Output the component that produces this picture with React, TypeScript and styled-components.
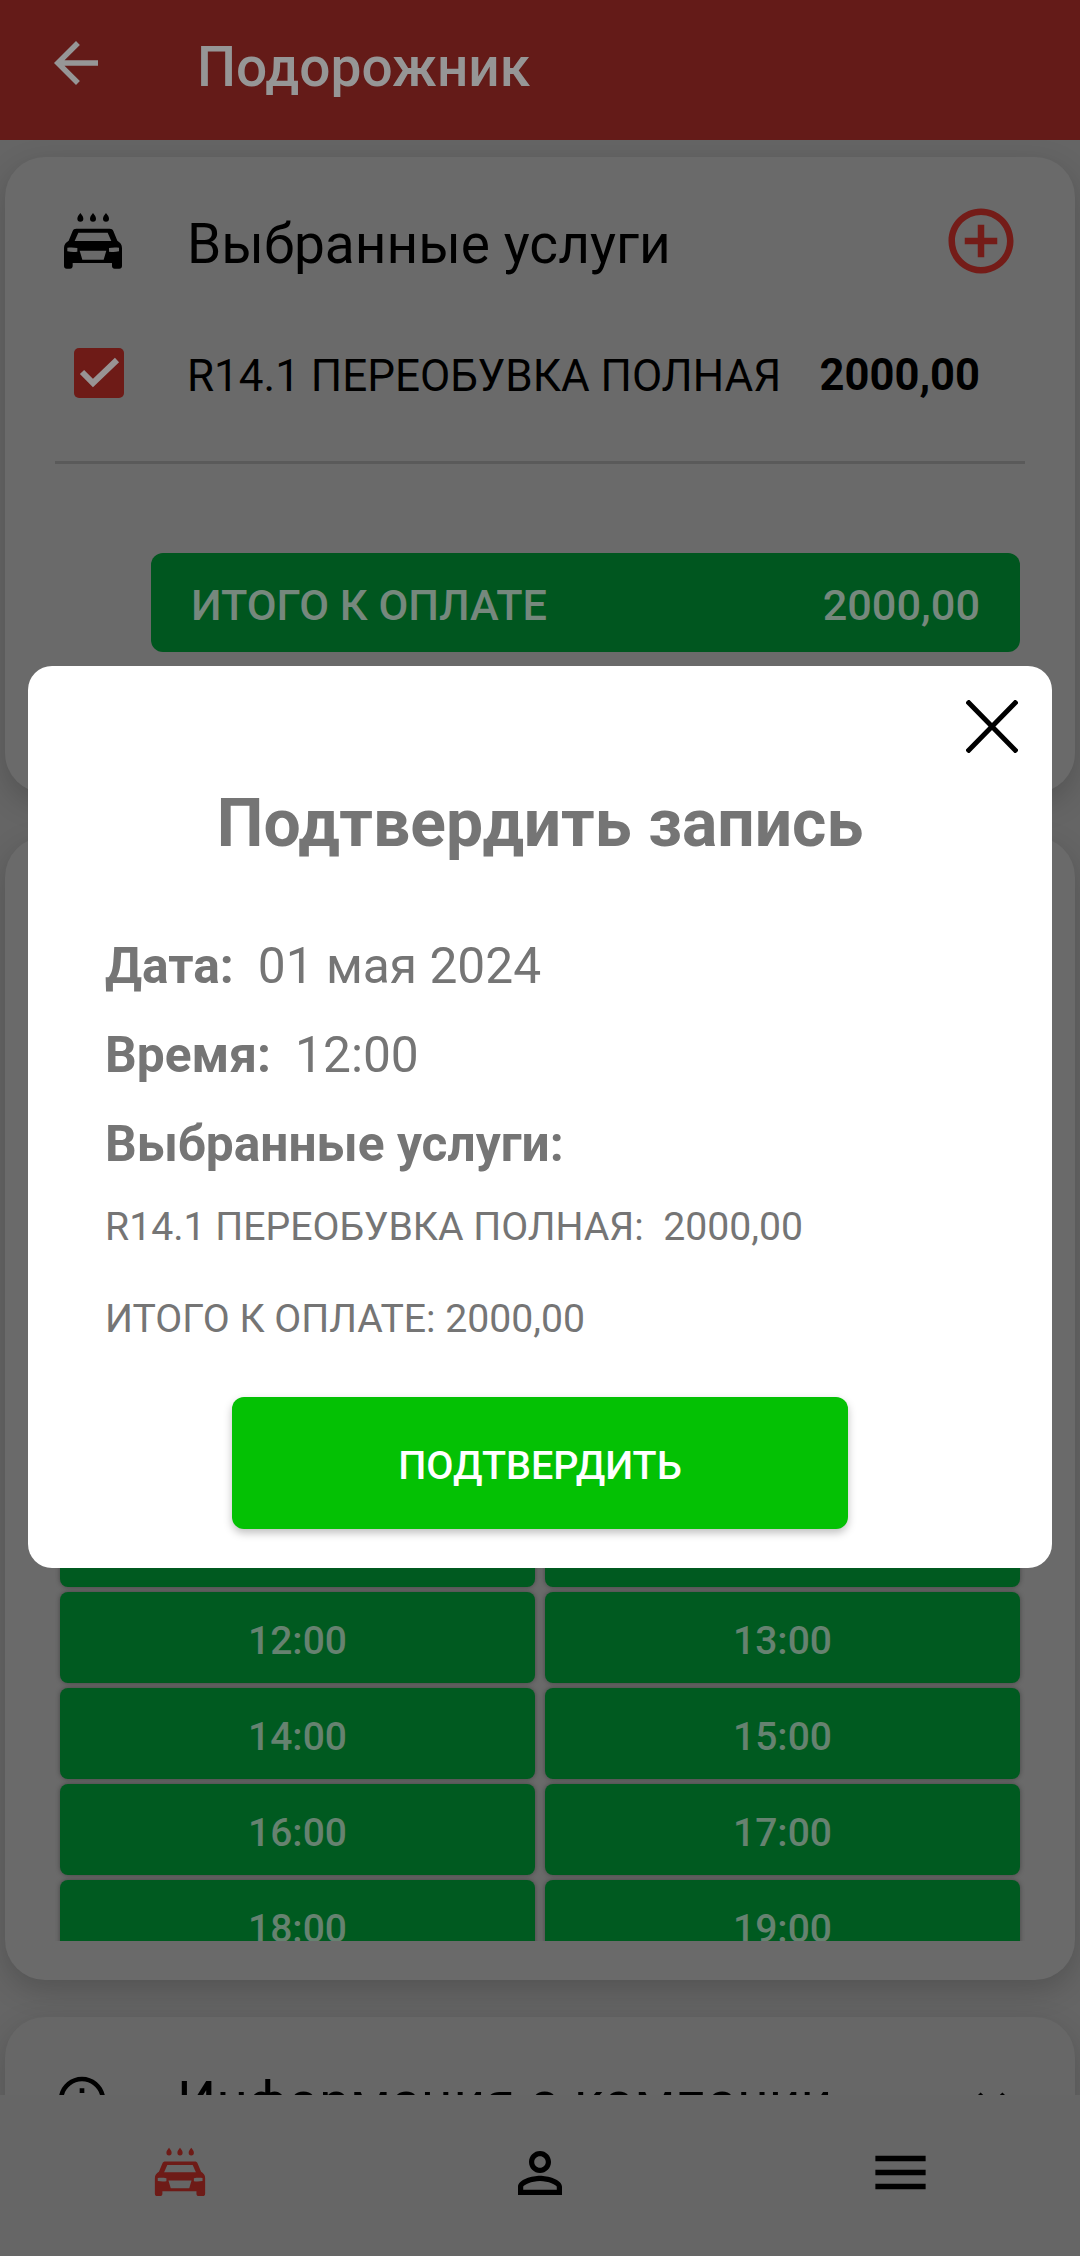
import { createGlobalStyle, styled } from "styled-components";

const GlobalStyle = createGlobalStyle`
  html, body {
    margin: 0;
    padding: 0;
    background: #656565;
  }
  * {
    box-sizing: border-box;
  }
`;

const Screen = styled.div`
  position: relative;
  display: flex;
  flex-direction: column;
  width: 1080px;
  height: 2256px;
  overflow: hidden;
  background: #656565;
  font-family: Roboto, "Noto Sans", sans-serif;
  color: #000;
`;

const Header = styled.header`
  display: flex;
  align-items: center;
  flex: 0 0 140px;
  padding: 0 0 14px 43px;
  background: #641b18;
  color: #969696;
  font-size: 55px;
  font-weight: 500;
`;
const HeaderTitle = styled.span`
  margin: 8px 0 0 88px;
`;

const Content = styled.main`
  display: flex;
  flex-direction: column;
  flex: 1;
  min-height: 0;
  overflow: hidden;
  padding: 17px 5px 0;
`;

const Card = styled.section<{ $height: number; $gap: number; $flat?: boolean }>`
  flex: 0 0 ${(p) => p.$height}px;
  display: flex;
  flex-direction: column;
  margin-bottom: ${(p) => p.$gap}px;
  padding: 0 50px;
  border-radius: 40px;
  background: ${(p) => (p.$flat ? "#676767" : "#6a6a6a")};
  box-shadow: 0 10px 30px rgba(0, 0, 0, 0.18);
`;

const TitleRow = styled.div`
  display: flex;
  align-items: center;
  height: 120px;
  margin: 24px 0 0 8px;
  font-size: 55px;
`;
const TitleText = styled.span`
  flex: 1;
  margin: 6px 0 0 64px;
`;
const PlusButton = styled.span`
  display: flex;
  margin-right: 5px;
  color: #741c18;
`;

const ServiceRow = styled.div`
  display: flex;
  align-items: center;
  height: 80px;
  margin: 33px 0 0 19px;
  font-size: 44px;
`;
const CheckBox = styled.span`
  display: flex;
  flex: 0 0 50px;
  height: 50px;
  margin-top: -3px;
  border-radius: 5px;
  background: #6e1b17;
  color: #989494;
`;
const ServiceName = styled.span`
  flex: 1;
  margin: 3px 0 0 63px;
`;
const Price = styled.span`
  margin: 3px 45px 0 0;
  font-size: 43.5px;
  font-weight: 700;
`;

const Divider = styled.hr`
  height: 3px;
  margin: 47px 0 0;
  border: 0;
  background: #5a5a5a;
`;

const TotalBar = styled.div`
  display: flex;
  align-items: center;
  justify-content: space-between;
  height: 99px;
  margin: 89px 5px 0 96px;
  padding: 5px 40px 0;
  border-radius: 12px;
  background: #00561f;
  color: #76887d;
  font-size: 43.3px;
  font-weight: 500;
`;

const TimeList = styled.div`
  display: grid;
  grid-template-columns: 1fr 1fr;
  grid-auto-rows: 91px;
  gap: 5px 10px;
  height: 445px;
  margin-top: 659px;
  padding: 0 5px;
  overflow: hidden;
`;
const TimeSlot = styled.div`
  display: flex;
  align-items: center;
  justify-content: center;
  padding-top: 6px;
  border-radius: 8px;
  background: #005a20;
  color: #668270;
  font-size: 39px;
  font-weight: 500;
  box-shadow: 0 0 5px rgba(0, 0, 0, 0.35);
`;

const InfoRow = styled.div`
  display: flex;
  align-items: center;
  height: 56px;
  margin: 55px 5px 0 -1px;
  font-size: 55px;
`;
const InfoText = styled.span`
  flex: 1;
  margin: 4px 0 0 67px;
`;

const BottomNav = styled.nav`
  display: grid;
  grid-template-columns: repeat(3, 1fr);
  align-items: center;
  flex: 0 0 161px;
  padding-bottom: 6px;
  background: #666;
`;
const NavItem = styled.span<{ $active?: boolean }>`
  display: flex;
  justify-content: center;
  color: ${(p) => (p.$active ? "#6e1b17" : "#000")};
`;

const Modal = styled.div`
  position: absolute;
  top: 666px;
  left: 28px;
  width: 1024px;
  height: 902px;
  display: flex;
  flex-direction: column;
  padding: 0 77px;
  border-radius: 24px;
  background: #fff;
  color: #757575;
`;
const CloseButton = styled.span`
  position: absolute;
  top: 34px;
  right: 34px;
  display: flex;
  color: #000;
`;
const ModalTitle = styled.h2`
  margin: 120px 0 0;
  font-size: 66px;
  line-height: 75px;
  font-weight: 700;
  text-align: center;
`;
const Details = styled.div`
  margin-top: 77px;
`;
const DetailLine = styled.div`
  height: 56px;
  margin-bottom: 33px;
  line-height: 56px;
  font-size: 49.7px;
  &:last-child {
    margin-bottom: 0;
  }
`;
const DetailLabel = styled.b`
  font-weight: 700;
  margin-right: 24px;
`;
const SmallLine = styled.div<{ $gap: number }>`
  margin-top: ${(p) => p.$gap}px;
  font-size: 39.2px;
  line-height: 44px;
`;
const ConfirmButton = styled.button`
  align-self: center;
  width: 616px;
  height: 132px;
  margin-top: 56px;
  padding: 5px 0 0;
  border: 0;
  border-radius: 12px;
  background: #04c104;
  color: #fff;
  font-family: inherit;
  font-size: 39.5px;
  font-weight: 500;
  box-shadow: 0 4px 8px rgba(0, 0, 0, 0.25);
`;

const Icon = ({ d, size }: { d: string; size: number }) => (
  <svg width={size} height={size} viewBox="0 0 24 24" fill="currentColor">
    <path d={d} />
  </svg>
);

const CarIcon = ({ width }: { width: number }) => (
  <svg width={width} viewBox="100 65 180 175" fill="currentColor">
    <path d="M152 68c6 7 9 12 9 17a9 9 0 0 1-18 0c0-5 3-10 9-17zM190 68c6 7 9 12 9 17a9 9 0 0 1-18 0c0-5 3-10 9-17zM229 68c6 7 9 12 9 17a9 9 0 0 1-18 0c0-5 3-10 9-17z" />
    <path
      fillRule="evenodd"
      d="M140 115h100c6 0 9 2 11 7l12 29c9 5 14 12 14 22v54c0 5-3 8-8 8h-14c-5 0-8-3-8-8v-9H129v9c0 5-3 8-8 8h-10c-5 0-8-3-8-8v-54c0-10 5-17 14-22l12-29c2-5 5-7 11-7zM146 127l-11 25h110l-11-25zM113 172v11c10 2 20 2 30 1v-11c-10-2-20-2-30-1zM238 173v11c10 1 20 1 30-1v-11c-10-1-20-1-30 1zM150 181l8 27h64l8-27z"
    />
  </svg>
);

const CheckMark = () => (
  <svg width="50" height="50" viewBox="0 0 50 50" fill="none" stroke="currentColor" strokeWidth="6">
    <path d="M8 24l11 11L43 12" />
  </svg>
);

const CloseMark = () => (
  <svg width="52" height="53" viewBox="0 0 52 53" fill="none" stroke="currentColor" strokeWidth="5">
    <path d="M1 1l50 51M51 1L1 52" />
  </svg>
);

const icons = {
  back: "M20 11H7.83l5.59-5.59L12 4l-8 8 8 8 1.41-1.41L7.83 13H20v-2z",
  plus: "M13 7h-2v4H7v2h4v4h2v-4h4v-2h-4V7zm-1-5C6.48 2 2 6.48 2 12s4.48 10 10 10 10-4.48 10-10S17.52 2 12 2zm0 18c-4.41 0-8-3.59-8-8s3.59-8 8-8 8 3.59 8 8-3.59 8-8 8z",
  info: "M11 7h2v2h-2zm0 4h2v6h-2zm1-9C6.48 2 2 6.48 2 12s4.48 10 10 10 10-4.48 10-10S17.52 2 12 2zm0 18c-4.41 0-8-3.59-8-8s3.59-8 8-8 8 3.59 8 8-3.59 8-8 8z",
  chevron: "M16.59 8.59 12 13.17 7.41 8.59 6 10l6 6 6-6z",
  person:
    "M12 5.9c1.16 0 2.1.94 2.1 2.1s-.94 2.1-2.1 2.1S9.9 9.16 9.9 8s.94-2.1 2.1-2.1m0 9c2.97 0 6.1 1.46 6.1 2.1v1.1H5.9V17c0-.64 3.13-2.1 6.1-2.1M12 4C9.79 4 8 5.79 8 8s1.79 4 4 4 4-1.79 4-4-1.79-4-4-4zm0 9c-2.67 0-8 1.34-8 4v3h16v-3c0-2.66-5.33-4-8-4z",
  menu: "M3 18h18v-2H3v2zm0-5h18v-2H3v2zm0-7v2h18V6H3z",
};

const slots = ["10:00", "11:00", "12:00", "13:00", "14:00", "15:00", "16:00", "17:00", "18:00", "19:00"];

export default function App() {
  return (
    <Screen>
      <GlobalStyle />
      <Header>
        <Icon d={icons.back} size={66} />
        <HeaderTitle>Подорожник</HeaderTitle>
      </Header>

      <Content>
        <Card $height={636} $gap={44}>
          <TitleRow>
            <CarIcon width={60} />
            <TitleText>Выбранные услуги</TitleText>
            <PlusButton>
              <Icon d={icons.plus} size={78} />
            </PlusButton>
          </TitleRow>
          <ServiceRow>
            <CheckBox>
              <CheckMark />
            </CheckBox>
            <ServiceName>R14.1 ПЕРЕОБУВКА ПОЛНАЯ</ServiceName>
            <Price>2000,00</Price>
          </ServiceRow>
          <Divider />
          <TotalBar>
            <span>ИТОГО К ОПЛАТЕ</span>
            <span>2000,00</span>
          </TotalBar>
        </Card>

        <Card $height={1143} $gap={37}>
          <TimeList>
            {slots.map((slot) => (
              <TimeSlot key={slot}>{slot}</TimeSlot>
            ))}
          </TimeList>
        </Card>

        <Card $height={300} $gap={0} $flat>
          <InfoRow>
            <Icon d={icons.info} size={56} />
            <InfoText>Информация о компании</InfoText>
            <Icon d={icons.chevron} size={57} />
          </InfoRow>
        </Card>
      </Content>

      <BottomNav>
        <NavItem $active>
          <CarIcon width={52} />
        </NavItem>
        <NavItem>
          <Icon d={icons.person} size={66} />
        </NavItem>
        <NavItem>
          <Icon d={icons.menu} size={67} />
        </NavItem>
      </BottomNav>

      <Modal>
        <CloseButton>
          <CloseMark />
        </CloseButton>
        <ModalTitle>Подтвердить запись</ModalTitle>
        <Details>
          <DetailLine>
            <DetailLabel>Дата:</DetailLabel>01 мая 2024
          </DetailLine>
          <DetailLine>
            <DetailLabel>Время:</DetailLabel>12:00
          </DetailLine>
          <DetailLine>
            <DetailLabel>Выбранные услуги:</DetailLabel>
          </DetailLine>
        </Details>
        <SmallLine $gap={33}>R14.1 ПЕРЕОБУВКА ПОЛНАЯ:&nbsp; 2000,00</SmallLine>
        <SmallLine $gap={48}>ИТОГО К ОПЛАТЕ: 2000,00</SmallLine>
        <ConfirmButton>ПОДТВЕРДИТЬ</ConfirmButton>
      </Modal>
    </Screen>
  );
}
